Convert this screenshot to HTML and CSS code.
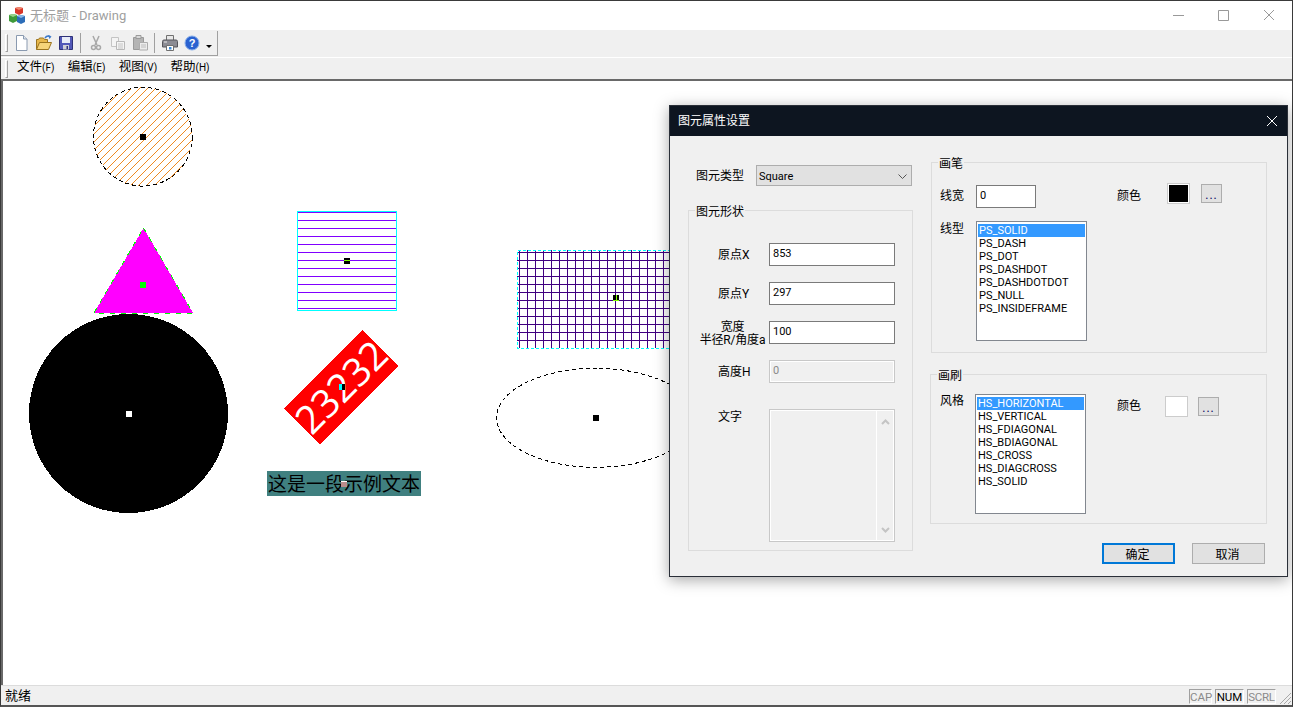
FILE: index.html
```html
<!DOCTYPE html>
<html lang="zh-CN">
<head>
    <meta charset="UTF-8">
    <title>无标题 - Drawing</title>
    <link rel="stylesheet" href="styles.css">
</head>
<body>
<div class="window">
    <div class="titlebar">
        <svg class="app-icon" width="17" height="17" viewBox="0 0 17 17">
            <path d="M6 1l4-1 4 1v5l-4 2-4-2z" fill="#d8362a"/>
            <path d="M10 0l4 1-4 2-4-2z" fill="#f08a70"/>
            <path d="M0 8l4-1 4 1v6l-4 2-4-2z" fill="#3f9a3a"/>
            <path d="M4 7l4 1-4 2-4-2z" fill="#9ad48c"/>
            <path d="M8 9l4-1 4 1v6l-4 2-4-2z" fill="#2c6db8"/>
            <path d="M12 8l4 1-4 2-4-2z" fill="#8ab8e8"/>
        </svg>
        <span class="title-text">无标题 - Drawing</span>
        <div class="win-controls">
            <svg width="102" height="12" viewBox="0 0 102 12">
                <path d="M0 6.500h11" stroke="#999" fill="none"/>
                <path d="M45.500 1.500h10v10h-10z" stroke="#999" fill="none"/>
                <path d="M91 1l10 10M101 1l-10 10" stroke="#999" fill="none"/>
            </svg>
        </div>
    </div>

    <div class="bars">
        <div class="toolbar">
            <span class="gripper"></span>
            <span class="tool">
                <svg width="16" height="16" viewBox="0 0 16 16"><path d="M2.500.5h7l3.500 3.500v11.500h-10.500z" fill="#fff" stroke="#8a9ab0"/><path d="M9.500.5v3.500h3.500" fill="#dfe6f0" stroke="#8a9ab0"/></svg>
            </span>
            <span class="tool">
                <svg width="16" height="16" viewBox="0 0 16 16"><path d="M.5 14.500v-10h2l1-1.500h4l1 1.500h3v3" fill="#e8b84c" stroke="#9a7420"/><path d="M.5 14.500l3-7h12l-3 7z" fill="#f6d47a" stroke="#9a7420"/><path d="M9 3q2-3 5-1.500" fill="none" stroke="#3a78c8" stroke-width="1.500"/><path d="M12 0l3.500 1.500-2 2.500z" fill="#3a78c8"/></svg>
            </span>
            <span class="tool">
                <svg width="16" height="16" viewBox="0 0 16 16"><path d="M1.500 1.500h13v13h-13z" fill="#5258b8" stroke="#2e3278"/><path d="M4 2h8v6h-8z" fill="#e8ecf8"/><path d="M5 10h6v4.500h-6z" fill="#d0d0d8"/><path d="M8.500 11h1.500v3h-1.500z" fill="#2e3278"/></svg>
            </span>
            <span class="tool-sep"></span>
            <span class="tool">
                <svg width="16" height="16" viewBox="0 0 16 16"><path d="M5 1l4 9M11 1l-4 9" stroke="#a8a8a8" stroke-width="1.500" fill="none"/><circle cx="5.500" cy="12.500" r="2" fill="none" stroke="#a8a8a8" stroke-width="1.500"/><circle cx="10.500" cy="12.500" r="2" fill="none" stroke="#a8a8a8" stroke-width="1.500"/></svg>
            </span>
            <span class="tool">
                <svg width="16" height="16" viewBox="0 0 16 16"><path d="M1.500 2.500h7v9h-7z" fill="#f4f4f4" stroke="#c4c4c4"/><path d="M6.500 6.500h8v8h-8z" fill="#f4f4f4" stroke="#b8b8b8"/><path d="M8 9h5M8 11h5M8 13h5" stroke="#c4c4c4"/></svg>
            </span>
            <span class="tool">
                <svg width="16" height="16" viewBox="0 0 16 16"><path d="M1.500 2.500h10v12h-10z" fill="#b4b4b4" stroke="#9a9a9a"/><path d="M4 .5h5v3h-5z" fill="#d8d8d8" stroke="#9a9a9a"/><path d="M7.500 7.500h8v7.500h-8z" fill="#ececec" stroke="#acacac"/><path d="M9 10h5M9 12h5" stroke="#bcbcbc"/></svg>
            </span>
            <span class="tool-sep"></span>
            <span class="tool">
                <svg width="16" height="16" viewBox="0 0 16 16"><path d="M4.500.5h7v5h-7z" fill="#e8e8e8" stroke="#707070"/><path d="M.5 6.500q0-1.500 1.500-1.500h12q1.500 0 1.500 1.500v5.500h-15z" fill="#8c8c94" stroke="#56565c"/><path d="M4.500 10.500h7v5h-7z" fill="#fff" stroke="#707070"/><path d="M7 12h2.500v2.500h-2.500z" fill="#3a8ad8"/><path d="M2 7h3" stroke="#e8e8e8"/></svg>
            </span>
            <span class="tool">
                <svg width="16" height="16" viewBox="0 0 16 16"><circle cx="8" cy="8" r="7" fill="#2a62d0" stroke="#8ab0ea"/><text x="8" y="12" class="help-mark">?</text></svg>
            </span>
            <span class="tool-more"><span class="more-arrow"></span></span>
        </div>
        <div class="menubar">
            <span class="gripper"></span>
            <span class="menu-item">文件<small>(F)</small></span>
            <span class="menu-item">编辑<small>(E)</small></span>
            <span class="menu-item">视图<small>(V)</small></span>
            <span class="menu-item">帮助<small>(H)</small></span>
        </div>
    </div>

    <div class="canvas">
        <svg class="drawing" width="1289" height="604" viewBox="3 81 1289 604">
            <defs>
                <pattern id="hatchB" patternUnits="userSpaceOnUse" x="93" y="87" width="8" height="8">
                    <path d="M-1 9L9 -1" stroke="#ee8a22" stroke-width="1"/>
                </pattern>
                <pattern id="hatchH" patternUnits="userSpaceOnUse" x="297" y="212" width="8" height="8">
                    <rect width="8" height="1" fill="#8000ff"/>
                </pattern>
                <pattern id="hatchX" patternUnits="userSpaceOnUse" x="519" y="252" width="8" height="8">
                    <rect width="8" height="1" fill="#400080"/>
                    <rect width="1" height="8" fill="#400080"/>
                </pattern>
            </defs>

            <circle cx="142.800" cy="136.700" r="49.400" fill="url(#hatchB)" stroke="#000" stroke-dasharray="4 3"/>
            <rect x="140" y="134" width="6" height="6" fill="#000"/>

            <polygon points="143.500,228 193,313 94,313" fill="#f0f"/>
            <polygon points="143.500,228 193,313 94,313" fill="none" stroke="#0f0" stroke-dasharray="5 6"/>
            <rect x="140" y="282" width="6" height="6" fill="#0f0"/>

            <circle cx="128.500" cy="413.500" r="99.500" fill="#000"/>
            <rect x="126" y="411" width="6" height="6" fill="#fff"/>

            <rect x="297" y="212" width="100" height="99" fill="url(#hatchH)"/>
            <rect x="297.500" y="211.500" width="99" height="99" fill="none" stroke="#0ff"/>
            <rect x="344" y="258" width="6" height="6" fill="#000"/>
            <rect x="344" y="260" width="6" height="1" fill="#80ff00"/>

            <rect x="517" y="250" width="200" height="98" fill="url(#hatchX)"/>
            <rect x="517.500" y="250.500" width="199" height="98" fill="none" stroke="#0ff" stroke-dasharray="3 2"/>
            <rect x="613" y="295" width="6" height="6" fill="#000"/>
            <rect x="613" y="300" width="6" height="1" fill="#80ff00"/>
            <rect x="616" y="295" width="1" height="5" fill="#80ff00"/>

            <ellipse cx="596" cy="417.800" rx="99.500" ry="49.500" fill="none" stroke="#000" stroke-dasharray="4 3"/>
            <rect x="593" y="415" width="6" height="6" fill="#000"/>

            <g transform="rotate(-45 341.300 387)">
                <rect x="285.800" y="361.600" width="111" height="50.800" fill="#f00"/>
                <text x="341.300" y="401" class="rotated-label">23232</text>
            </g>
            <rect x="339" y="384" width="3" height="6" fill="#0ff"/>
            <rect x="342" y="384" width="3" height="6" fill="#000"/>

            <rect x="267" y="471" width="154" height="25" fill="#408080"/>
            <text x="268" y="491" class="sample-text">这是一段示例文本</text>
            <rect x="341" y="481" width="6" height="6" fill="#b98c8c"/>
            <rect x="341" y="481" width="6" height="1" fill="#fff"/>
        </svg>
    </div>

    <div class="statusbar">
        <span class="status-text">就绪</span>
        <span class="status-panel panel-cap">CAP</span>
        <span class="status-panel panel-num">NUM</span>
        <span class="status-panel panel-scrl">SCRL</span>
        <svg class="grip" width="15" height="15" viewBox="0 0 15 15">
            <path d="M14 3L3 14M14 7L7 14M14 11L11 14" stroke="#a8a8a8" fill="none"/>
        </svg>
    </div>
</div>

<div class="dialog">
    <div class="dialog-title">
        <span class="dialog-caption">图元属性设置</span>
        <svg width="10" height="10" viewBox="0 0 10 10"><path d="M0 0l10 10M10 0L0 10" stroke="#fff" fill="none"/></svg>
    </div>
    <div class="dialog-body">
        <div class="col-left">
            <div class="type-row">
                <span class="type-label">图元类型</span>
                <div class="combo">
                    <span>Square</span>
                    <svg width="9" height="5" viewBox="0 0 9 5"><path d="M.5 .5l4 4 4-4" stroke="#555" fill="none"/></svg>
                </div>
            </div>
            <div class="group group-shape">
                <span class="group-title">图元形状</span>
                <div class="shape-grid">
                    <span class="field-label">原点X</span>
                    <div class="edit">853</div>
                    <span class="field-label">原点Y</span>
                    <div class="edit">297</div>
                    <span class="field-label field-label-wide">宽度<br>半径R/角度a</span>
                    <div class="edit">100</div>
                    <span class="field-label field-label-low">高度H</span>
                    <div class="edit edit-off">0</div>
                </div>
                <div class="text-row">
                    <span class="field-label field-label-low">文字</span>
                    <div class="memo">
                        <div class="memo-scroll">
                            <svg width="9" height="6" viewBox="0 0 9 6"><path d="M1 5l3.500-3.500 3.500 3.500" stroke="#c4c4c4" stroke-width="2" fill="none"/></svg>
                            <svg width="9" height="6" viewBox="0 0 9 6"><path d="M1 1l3.500 3.500 3.500-3.500" stroke="#c4c4c4" stroke-width="2" fill="none"/></svg>
                        </div>
                    </div>
                </div>
            </div>
        </div>

        <div class="col-right">
            <div class="group group-pen">
                <span class="group-title">画笔</span>
                <div class="pen-row">
                    <span class="pen-label">线宽</span>
                    <div class="edit edit-width">0</div>
                    <span class="color-label">颜色</span>
                    <span class="swatch swatch-black"></span>
                    <button class="more-btn">...</button>
                </div>
                <div class="pen-list-row">
                    <span class="list-label">线型</span>
                    <ul class="listbox">
                        <li class="selected">PS_SOLID</li>
                        <li>PS_DASH</li>
                        <li>PS_DOT</li>
                        <li>PS_DASHDOT</li>
                        <li>PS_DASHDOTDOT</li>
                        <li>PS_NULL</li>
                        <li>PS_INSIDEFRAME</li>
                    </ul>
                </div>
            </div>
            <div class="group group-brush">
                <span class="group-title">画刷</span>
                <div class="brush-row">
                    <span class="list-label">风格</span>
                    <ul class="listbox">
                        <li class="selected">HS_HORIZONTAL</li>
                        <li>HS_VERTICAL</li>
                        <li>HS_FDIAGONAL</li>
                        <li>HS_BDIAGONAL</li>
                        <li>HS_CROSS</li>
                        <li>HS_DIAGCROSS</li>
                        <li>HS_SOLID</li>
                    </ul>
                    <span class="color-label">颜色</span>
                    <span class="swatch swatch-white"></span>
                    <button class="more-btn">...</button>
                </div>
            </div>
            <div class="dialog-buttons">
                <button class="push-btn push-default">确定</button>
                <button class="push-btn">取消</button>
            </div>
        </div>
    </div>
</div>
</body>
</html>
```

FILE: styles.css
```css
* {
    box-sizing: border-box;
}

html, body {
    margin: 0;
    padding: 0;
    height: 707px;
    overflow: hidden;
}

body {
    font-family: Roboto, "Noto Sans CJK SC", sans-serif;
    font-size: 12px;
    color: #000;
    background-color: #fff;
}

.window {
    height: 707px;
    display: flex;
    flex-direction: column;
    border: 1px solid #3a3a3a;
    border-bottom: 2px solid #555;
}

/* title bar */
.titlebar {
    height: 29px;
    flex: none;
    display: flex;
    align-items: center;
    padding-left: 8px;
    background-color: #fff;
}

.app-icon {
    flex: none;
    margin-right: 4px;
}

.title-text {
    font-size: 13px;
    color: #a0a0a0;
    margin-bottom: 2px;
}

.win-controls {
    margin-left: auto;
    margin-right: 17px;
    display: flex;
    margin-top: -2px;
}

/* tool and menu bands */
.bars {
    flex: none;
    height: 49px;
    padding-top: 1px;
    background-color: #f0f0f0;
    border-top: 0;
}

.toolbar {
    width: 217px;
    height: 25px;
    display: flex;
    align-items: center;
    border-right: 1px solid #a0a0a0;
    border-bottom: 1px solid #a0a0a0;
}

.gripper {
    width: 3px;
    height: 18px;
    flex: none;
    margin-left: 4px;
    margin-right: 3px;
    border: 1px solid #a0a0a0;
    border-top-color: #fff;
    border-left-color: #fff;
}

.tool {
    width: 22px;
    flex: none;
    display: flex;
    justify-content: center;
}

.tool-sep {
    width: 1px;
    height: 20px;
    flex: none;
    margin: 0 4px 0 3px;
    background-color: #a0a0a0;
}

.tool-more {
    width: 12px;
    flex: none;
    display: flex;
    justify-content: center;
    padding-top: 6px;
}

.more-arrow {
    width: 0;
    height: 0;
    border-left: 3px solid transparent;
    border-right: 3px solid transparent;
    border-top: 3px solid #000;
}

.help-mark {
    font: bold 11px "Liberation Sans", sans-serif;
    fill: #fff;
    text-anchor: middle;
}

.menubar {
    height: 22px;
    margin-top: 1px;
    display: flex;
    align-items: center;
    gap: 13.400px;
    border-top: 1px solid #fff;
}

.menubar .gripper {
    margin-right: -4.400px;
}

.menu-item {
    font-size: 12.500px;
    white-space: nowrap;
    margin-bottom: 7px;
}

.menu-item small {
    font-size: 10px;
}

/* drawing area */
.canvas {
    flex: 1;
    min-height: 0;
    background-color: #fff;
    border-top: 2px solid #696969;
    border-left: 2px solid #696969;
    overflow: hidden;
}

.drawing {
    display: block;
    shape-rendering: crispEdges;
}

.rotated-label {
    font-family: "Open Sans", sans-serif;
    font-size: 39px;
    fill: #fff;
    text-anchor: middle;
}

.sample-text {
    font-family: "Noto Sans CJK SC", sans-serif;
    font-size: 19px;
    fill: #000;
}

/* status bar */
.statusbar {
    height: 20px;
    flex: none;
    display: flex;
    align-items: flex-end;
    padding-left: 4px;
    background-color: #f0f0f0;
    border-top: 1px solid #dcdcdc;
}

.status-text {
    font-size: 13px;
    line-height: 18px;
    margin-right: auto;
}

.status-panel {
    height: 15px;
    margin-bottom: 1px;
    margin-right: 3px;
    font-size: 11.500px;
    line-height: 14px;
    text-align: center;
    color: #8a8a8a;
    border: 1px solid #fff;
    border-top-color: #a0a0a0;
    border-left-color: #a0a0a0;
}

.panel-cap {
    width: 23px;
}

.panel-num {
    width: 29px;
    color: #000;
}

.panel-scrl {
    width: 29px;
    margin-right: 1px;
    letter-spacing: -0.300px;
}

.grip {
    flex: none;
}

/* dialog sits over the drawing */
.dialog {
    position: absolute;
    left: 669px;
    top: 105px;
    width: 619px;
    height: 472px;
    border: 1px solid #2a2f38;
    background-color: #f0f0f0;
    box-shadow: 0 3px 14px rgba(0, 0, 0, 0.35);
}

.dialog-title {
    height: 30px;
    display: flex;
    align-items: center;
    justify-content: space-between;
    padding: 0 10px 0 8px;
    color: #fff;
    background-color: #0d1520;
}

.dialog-caption {
    margin-bottom: 3px;
}

.dialog-body {
    display: flex;
    gap: 18px;
    padding: 26px 0 0 18px;
}

.col-left {
    width: 225px;
    padding-top: 3px;
}

.col-right {
    width: 336px;
}

.type-row {
    display: flex;
    align-items: center;
    height: 21px;
}

.type-label {
    width: 68px;
    padding-left: 8px;
    margin-top: -3px;
}

.combo {
    width: 156px;
    height: 21px;
    display: flex;
    align-items: center;
    justify-content: space-between;
    padding: 1px 4px 0 2px;
    font-size: 11px;
    background-color: #e1e1e1;
    border: 1px solid #adadad;
}

.group {
    position: relative;
    border: 1px solid #dcdcdc;
}

.group-title {
    position: absolute;
    top: -7px;
    left: 6px;
    padding: 0 1px;
    line-height: 16px;
    background-color: #f0f0f0;
}

.group-shape {
    height: 341px;
    margin-top: 24px;
    padding: 32px 0 0 7px;
}

.shape-grid {
    display: grid;
    grid-template-columns: 73px 126px;
    grid-auto-rows: 23px;
    row-gap: 16px;
    align-items: center;
}

.field-label {
    padding-left: 22px;
    line-height: 14px;
}

.field-label-wide {
    padding: 3px 0 0;
    line-height: 13px;
    letter-spacing: -0.200px;
    text-align: center;
}

.field-label-low {
    padding-top: 1px;
}

.edit {
    height: 23px;
    padding: 1px 3px;
    font-size: 11px;
    line-height: 18px;
    background-color: #fff;
    border: 1px solid #7a7a7a;
}

.edit-off {
    color: #8a8a8a;
    background-color: #f0f0f0;
    border-color: #c8c8c8;
    box-shadow: inset 0 0 0 1px #fff;
}

.text-row {
    display: grid;
    grid-template-columns: 73px 126px;
    margin-top: 26px;
}

.memo {
    height: 133px;
    display: flex;
    justify-content: flex-end;
    border: 1px solid #c8c8c8;
    box-shadow: inset 0 0 0 1px #fff;
}

.memo-scroll {
    width: 18px;
    margin: 1px 0;
    display: flex;
    flex-direction: column;
    justify-content: space-between;
    align-items: center;
    padding: 8px 0 7px;
    border-left: 1px solid #fff;
}

.group-pen {
    height: 191px;
    padding: 20px 0 0 8px;
}

.pen-row,
.pen-list-row,
.brush-row {
    display: flex;
    align-items: flex-start;
}

.pen-label {
    width: 36px;
    line-height: 16px;
    margin-top: 5px;
}

.edit-width {
    width: 60px;
    margin-top: 2px;
}

.color-label {
    width: 50px;
    line-height: 16px;
    margin-top: 5px;
    margin-left: 81px;
}

.swatch {
    width: 23px;
    height: 21px;
    flex: none;
    border: 1px solid #ccc;
}

.swatch-black {
    background-color: #000;
    box-shadow: inset 0 0 0 1px #fff;
}

.swatch-white {
    margin-top: 3px;
    background-color: #fff;
}

.more-btn {
    width: 21px;
    height: 19px;
    flex: none;
    margin: 1px 0 0 11px;
    padding: 3px 0 0;
    font-family: inherit;
    font-size: 12px;
    line-height: 14px;
    letter-spacing: 1px;
    color: #000060;
    background-color: #e1e1e1;
    border: 1px solid #adadad;
}

.pen-list-row {
    margin-top: 13px;
}

.list-label {
    width: 36px;
    line-height: 16px;
    flex: none;
}

.listbox {
    width: 111px;
    height: 120px;
    flex: none;
    margin: 0;
    padding: 2px 1px 1px;
    list-style: none;
    font-size: 11px;
    line-height: 13px;
    background-color: #fff;
    border: 1px solid #82878f;
}

.listbox li {
    padding-left: 1px;
    white-space: nowrap;
}

.listbox .selected {
    color: #fff;
    background-color: #3399ff;
}

.group-brush {
    height: 150px;
    margin: 21px 0 0 -1px;
    padding: 18px 0 0 9px;
}

.brush-row .list-label {
    width: 35px;
}

.brush-row .listbox {
    margin-top: 1px;
}

.brush-row .color-label {
    width: 48px;
    margin-left: 31px;
}

.brush-row .more-btn {
    margin: 4px 0 0 10px;
}

.dialog-buttons {
    display: flex;
    justify-content: flex-end;
    gap: 17px;
    margin-top: 19px;
    padding-right: 2px;
}

.push-btn {
    width: 73px;
    height: 21px;
    padding: 0 2px 0 0;
    font-family: inherit;
    font-size: 12px;
    color: #000;
    background-color: #e1e1e1;
    border: 1px solid #adadad;
}

.push-default {
    border: 2px solid #0078d7;
}
```
